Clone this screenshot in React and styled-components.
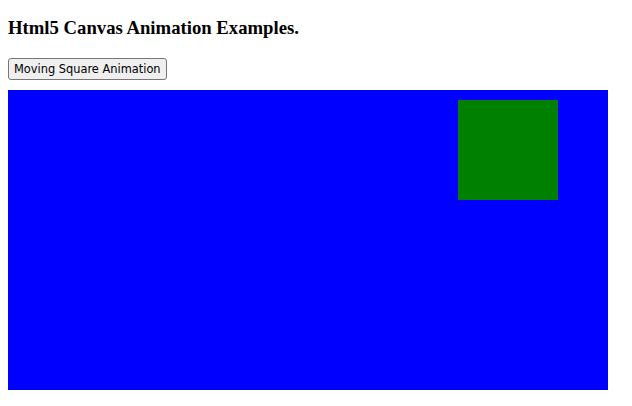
import React from 'react';
import styled, { createGlobalStyle } from 'styled-components';

const GlobalStyle = createGlobalStyle`
  body {
    margin: 8px;
    background: #fff;
    font-family: "Liberation Serif", "Times New Roman", serif;
  }
`;

const Heading = styled.h3`
  font-size: 18.72px;
  font-weight: bold;
  margin: 9px 0 18.72px;
  line-height: normal;
  color: #000;
`;

const Toolbar = styled.div`
  display: flex;
  margin-bottom: 10px;
`;

const Button = styled.button`
  font-family: "DejaVu Sans", "Liberation Sans", sans-serif;
  font-size: 11.4px;
  color: #000;
  background: #efefef;
  border: 1px solid #767676;
  border-radius: 3px;
  padding: 2px 5px;
  height: 22px;
  cursor: pointer;
  &:hover {
    background: #e5e5e5;
  }
`;

const Stage = styled.div`
  position: relative;
  width: 600px;
  height: 300px;
  background: #0000ff;
`;

// the square's place on the stage is the animation state
const Square = styled.div`
  position: absolute;
  width: ${({ size }) => size}px;
  height: ${({ size }) => size}px;
  background: #008000;
`;

const App = () => {
  const pos = { x: 450, y: 10 };
  return (
    <>
      <GlobalStyle />
      <Heading>Html5 Canvas Animation Examples.</Heading>
      <Toolbar>
        <Button>Moving Square Animation</Button>
      </Toolbar>
      <Stage>
        <Square size={100} style={{ left: pos.x, top: pos.y }} />
      </Stage>
    </>
  );
};

export default App;
